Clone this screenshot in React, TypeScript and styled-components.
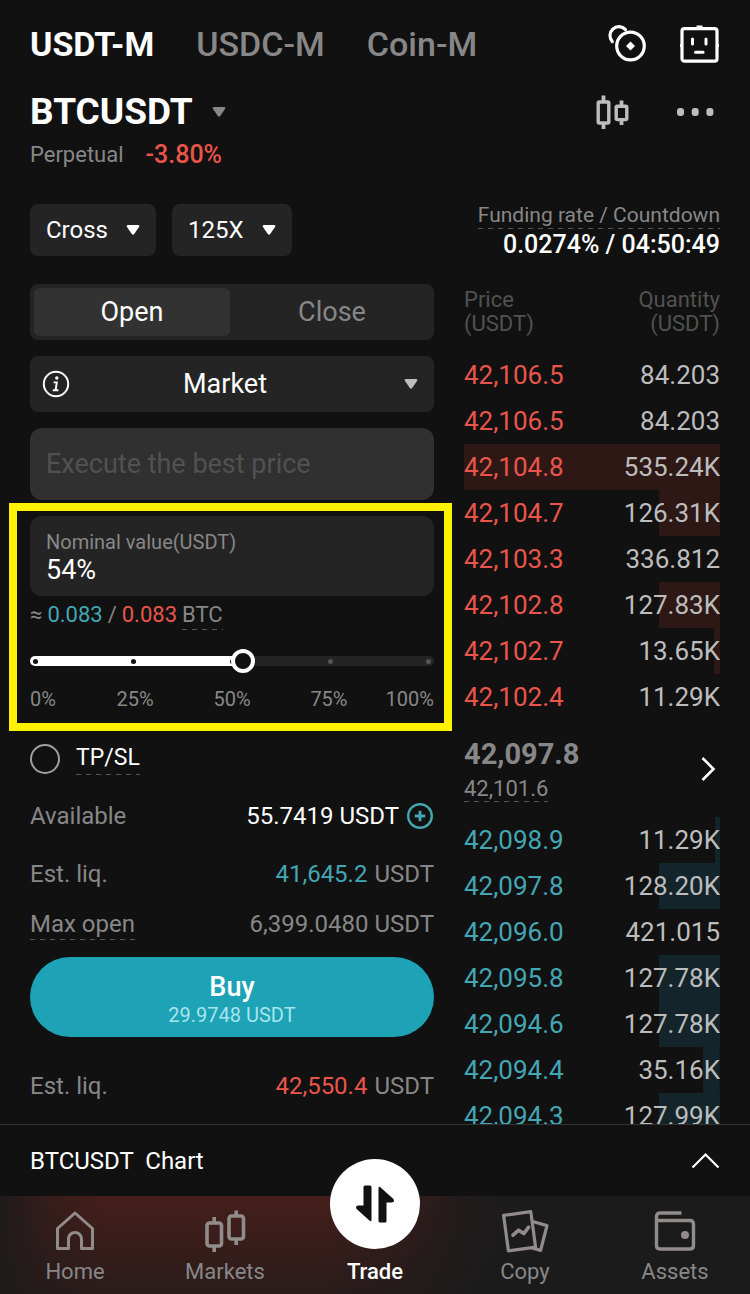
import React, { useState } from 'react';
import styled, { createGlobalStyle } from 'styled-components';

const color = {
  page: '#111111',
  panel: '#242424',
  raised: '#323232',
  muted: '#878787',
  faint: '#515151',
  soft: '#bdbdbd',
  up: '#43a6b5',
  down: '#ea554b',
  brand: '#1da2b6',
};

const GlobalStyle = createGlobalStyle`
  *, *::before, *::after { box-sizing: border-box; }
  body {
    margin: 0;
    background: ${color.page};
    color: #fff;
    font-family: Roboto, 'Liberation Sans', sans-serif;
    font-size: 24px;
    line-height: 30px;
  }
  button, input, select { font: inherit; color: inherit; margin: 0; padding: 0; border: 0; background: none; }
  button { cursor: pointer; }
  a { color: inherit; text-decoration: none; }
  svg { display: block; flex: none; }
`;

const Screen = styled.div`
  display: flex;
  flex-direction: column;
  height: 100vh;
`;

const Main = styled.main`
  flex: 1;
  min-height: 0;
  overflow: hidden;
  padding: 24px 30px 0;
`;

const Bar = styled.div`
  display: flex;
  align-items: center;
  justify-content: space-between;
`;

const TopBar = styled(Bar)`
  height: 40px;
  margin-bottom: 28px;
`;

const PairBar = styled(Bar)`
  padding-right: 6px;
`;

const Tabs = styled.nav`
  display: flex;
  gap: 42px;
`;

const Tab = styled.a<{ $active?: boolean }>`
  font-size: 34px;
  line-height: 40px;
  font-weight: ${(p) => (p.$active ? 700 : 500)};
  color: ${(p) => (p.$active ? '#fff' : color.muted)};
`;

const Tools = styled.div<{ $gap: number }>`
  display: flex;
  align-items: center;
  gap: ${(p) => p.$gap}px;
`;

const IconButton = styled.button<{ $tone?: string }>`
  display: flex;
  color: ${(p) => p.$tone ?? '#fff'};
`;

const PairButton = styled.button`
  display: flex;
  align-items: center;
  gap: 19px;
  font-size: 37px;
  line-height: 40px;
  font-weight: 700;
`;

const PairName = styled.h1`
  margin: 0;
  font: inherit;
`;

const PairMeta = styled.div`
  display: flex;
  gap: 22px;
  margin: 8px 0 34px;
  font-size: 22px;
  color: ${color.muted};
`;

const Change = styled.span`
  font-size: 25px;
  font-weight: 500;
  color: ${color.down};
`;

const Columns = styled.div`
  display: grid;
  grid-template-columns: minmax(0, 101fr) minmax(0, 64fr);
  gap: 30px;
`;

const Column = styled.section`
  display: flex;
  flex-direction: column;
`;

const Dashed = styled.span`
  padding-bottom: 2px;
  background: repeating-linear-gradient(90deg, #555 0 5px, transparent 5px 10px) left bottom / 100% 1px no-repeat;
`;

const ChipRow = styled.div`
  display: flex;
  gap: 16px;
  margin-bottom: 28px;
`;

const SelectBox = styled.label<{ $tall?: boolean }>`
  display: grid;
  align-items: center;
  height: ${(p) => (p.$tall ? 56 : 52)}px;
  border-radius: 8px;
  background: ${color.panel};
  & > * { grid-area: 1 / 1; }
  & > svg { justify-self: end; margin-right: 16px; pointer-events: none; }
`;

const ChipSelect = styled.select`
  appearance: none;
  height: 100%;
  padding: 0 48px 0 16px;
  outline: none;
`;

const TypeSelect = styled.select`
  appearance: none;
  width: 100%;
  height: 100%;
  padding: 0 30px 0 16px;
  font-size: 27px;
  text-align: center;
  text-align-last: center;
  outline: none;
`;

const InfoSlot = styled.span`
  justify-self: start;
  margin-left: 12px;
`;

const Segment = styled.div`
  display: flex;
  gap: 4px;
  padding: 4px;
  height: 56px;
  margin-bottom: 16px;
  border-radius: 8px;
  background: ${color.panel};
`;

const SegmentButton = styled.button<{ $active?: boolean }>`
  flex: 1;
  border-radius: 6px;
  font-size: 27px;
  color: ${(p) => (p.$active ? '#fff' : color.muted)};
  background: ${(p) => (p.$active ? color.raised : 'transparent')};
`;

const PriceInput = styled.input`
  width: 100%;
  height: 72px;
  margin: 16px 0;
  padding: 0 16px;
  border-radius: 12px;
  font-size: 27px;
  background: #303030;
  &::placeholder { color: ${color.faint}; opacity: 1; }
`;

const Sizing = styled.div`
  position: relative;
  display: flex;
  flex-direction: column;
  &::after {
    content: '';
    position: absolute;
    inset: -13px -18px -20px -21px;
    border: 8px solid #fff200;
    pointer-events: none;
  }
`;

const AmountField = styled.label`
  display: flex;
  flex-direction: column;
  height: 80px;
  padding: 12px 16px;
  border-radius: 12px;
  background: ${color.panel};
`;

const AmountLabel = styled.span`
  font-size: 20px;
  line-height: 28px;
  color: ${color.muted};
`;

const AmountInput = styled.input`
  width: 100%;
  font-size: 27px;
  line-height: 28px;
  outline: none;
`;

const Estimate = styled.p`
  display: flex;
  gap: 5px;
  margin: 6px 0 19px;
  font-size: 22px;
  line-height: 26px;
  color: ${color.muted};
`;

const Tone = styled.span<{ $tone: string }>`
  color: ${(p) => p.$tone};
`;

const SliderBox = styled.div`
  display: grid;
  align-items: center;
  height: 24px;
  & > * { grid-area: 1 / 1; }
`;

const Track = styled.div`
  display: flex;
  align-items: center;
  justify-content: space-between;
  height: 10px;
  padding: 0 3px;
  border-radius: 5px;
`;

const Dot = styled.i<{ $passed: boolean }>`
  width: 5px;
  height: 5px;
  border-radius: 50%;
  background: ${(p) => (p.$passed ? color.page : '#555')};
`;

const Range = styled.input`
  appearance: none;
  width: 100%;
  height: 24px;
  outline: none;
  &::-webkit-slider-thumb {
    appearance: none;
    width: 24px;
    height: 24px;
    border: 4px solid #fff;
    border-radius: 50%;
    background: ${color.page};
  }
`;

const Marks = styled.div`
  display: grid;
  grid-template-columns: 14fr 24fr 24fr 24fr 14fr;
  margin-top: 14px;
  font-size: 20px;
  line-height: 24px;
  color: ${color.muted};
  text-align: center;
  span:first-child { text-align: left; }
  span:last-child { text-align: right; }
`;

const StopLabel = styled.label`
  display: flex;
  align-items: center;
  gap: 16px;
  height: 34px;
  margin: 31px 0 25px;
  font-size: 23px;
`;

const RoundCheck = styled.input`
  appearance: none;
  width: 30px;
  height: 30px;
  border: 2px solid #a0a0a0;
  border-radius: 50%;
  &:checked { background: ${color.brand}; }
`;

const Facts = styled.dl`
  display: flex;
  flex-direction: column;
  gap: 20px;
  margin: 0;
`;

const Fact = styled.div<{ $gap?: number }>`
  display: flex;
  justify-content: space-between;
  align-items: center;
  height: 30px;
  margin-top: ${(p) => p.$gap ?? 0}px;
  dt, dd { margin: 0; }
  dt { color: ${color.muted}; }
  dd { display: flex; align-items: center; gap: 7px; color: ${color.muted}; }
`;

const BuyButton = styled.button`
  display: flex;
  flex-direction: column;
  align-items: center;
  justify-content: center;
  height: 80px;
  padding-top: 6px;
  margin: 18px 0 34px;
  border-radius: 40px;
  background: ${color.brand};
`;

const BuyTitle = styled.span`
  font-size: 27px;
  font-weight: 500;
`;

const BuyAmount = styled.span`
  font-size: 20px;
  line-height: 26px;
  color: #a9e4ed;
`;

const Funding = styled.div`
  display: flex;
  flex-direction: column;
  align-items: flex-end;
  height: 52px;
  margin-bottom: 32px;
  white-space: nowrap;
`;

const FundingLabel = styled(Dashed)`
  padding-bottom: 3px;
  font-size: 21px;
  line-height: 22px;
  color: ${color.muted};
`;

const FundingValue = styled.span`
  margin-top: 1px;
  font-size: 25px;
  font-weight: 500;
`;

const Book = styled.table`
  width: 100%;
  border-collapse: collapse;
  line-height: 24px;
  th, td { padding: 0; text-align: left; }
  th:last-child, td:last-child { text-align: right; }
  th { height: 64px; vertical-align: top; font-size: 22px; font-weight: 400; color: ${color.faint}; }
  td { height: 46px; font-size: 26px; color: ${color.soft}; }
`;

const BookRow = styled.tr<{ $side: 'ask' | 'bid' }>`
  background: ${(p) => {
    const fill = p.$side === 'ask' ? '#2e1816' : '#13252a';
    return `linear-gradient(${fill}, ${fill}) right / 0 100% no-repeat`;
  }};
  td:first-child { color: ${(p) => (p.$side === 'ask' ? color.down : color.up)}; }
`;

const LastPrice = styled.div`
  display: flex;
  justify-content: space-between;
  align-items: center;
  height: 97px;
  padding-right: 4px;
`;

const LastValues = styled.div`
  display: flex;
  flex-direction: column;
  align-items: flex-start;
  gap: 4px;
`;

const LastTrade = styled.strong`
  font-size: 29px;
  line-height: 36px;
  color: ${color.muted};
`;

const MarkPrice = styled(Dashed)`
  padding: 0;
  font-size: 22px;
  line-height: 26px;
  color: ${color.muted};
`;

const ChartBar = styled.button`
  display: flex;
  flex: none;
  align-items: center;
  justify-content: space-between;
  height: 72px;
  padding: 0 30px;
  border-top: 1px solid #333;
  white-space: pre;
`;

const BottomNav = styled.nav`
  display: grid;
  flex: none;
  grid-template: 100% / repeat(5, 1fr);
  height: 98px;
  background:
    linear-gradient(#1b1b1b00, #1b1b1ba8),
    linear-gradient(95deg, #1f1b1b 0%, #381d1b 7%, #451e1b 14%, #451e1b 44%, #341d1b 54%, #1f1b1b 62%, #1b1b1b 68%);
`;

const NavItem = styled.a<{ $active?: boolean }>`
  display: flex;
  flex-direction: column;
  align-items: center;
  justify-content: flex-end;
  padding-bottom: 7px;
  font-size: 22px;
  color: ${(p) => (p.$active ? '#fff' : color.muted)};
  font-weight: ${(p) => (p.$active ? 500 : 400)};
`;

const NavIcon = styled.span`
  display: flex;
  align-items: center;
  height: 44px;
  margin-bottom: 4px;
  color: #918c8b;
`;

const TradeBadge = styled.span`
  display: grid;
  place-items: center;
  flex: none;
  width: 90px;
  height: 90px;
  margin-bottom: 8px;
  border-radius: 50%;
  background: #fff;
  color: #111;
`;

const Caret = ({ tone = '#fff' }: { tone?: string }) => (
  <svg width="14" height="12" viewBox="0 0 14 12" fill={tone}>
    <path d="M2 1h10q2 0 1 2L8.2 10q-1.2 1.6-2.4 0L1 3Q0 1 2 1Z" />
  </svg>
);

const CoinsIcon = () => (
  <svg width="40" height="40" viewBox="0 0 40 40" fill="none" stroke="currentColor" strokeWidth="3.2" strokeLinecap="round">
    <circle cx="22.5" cy="22" r="13.8" />
    <path d="M4.3 17.6A8.8 8.8 0 1 1 17.5 5.6" />
    <path d="M22.5 17.5l4.500 4.500-4.500 4.500-4.500-4.500z" fill="currentColor" stroke="none" />
  </svg>
);

const BotIcon = () => (
  <svg width="40" height="40" viewBox="0 0 40 40" fill="none" stroke="currentColor">
    <rect x="2" y="4.6" width="35" height="32.6" rx="2.5" strokeWidth="3.2" />
    <path d="M16.5 3h6M0 21.5h2M37 21.5h2" strokeWidth="3" />
    <path d="M12.5 15v5M26 15v5M15.5 28.200h7.600" strokeWidth="3" strokeLinecap="round" />
  </svg>
);

const CandlesIcon = () => (
  <svg width="34" height="36" viewBox="0 0 34 36" fill="none" stroke="currentColor" strokeWidth="3.4">
    <rect x="2.2" y="8" width="10.6" height="21" rx="1" />
    <rect x="20.2" y="12.2" width="10.6" height="13.4" rx="1" />
    <path d="M7.5 1.500v6M7.500 29v6M25.500 6.500v5M25.500 26v5" strokeWidth="3.8" />
  </svg>
);

const MoreIcon = () => (
  <svg width="38" height="10" viewBox="0 0 38 10" fill="currentColor">
    <rect x="1" y="1" width="7" height="8" rx="3" />
    <rect x="15.7" y="1" width="7" height="8" rx="3" />
    <rect x="30.4" y="1" width="7" height="8" rx="3" />
  </svg>
);

const InfoIcon = () => (
  <svg width="28" height="28" viewBox="0 0 28 28" fill="none" stroke="currentColor">
    <circle cx="14" cy="14" r="12.2" strokeWidth="2" />
    <circle cx="14.8" cy="8" r="1.7" fill="currentColor" stroke="none" />
    <path d="M11.6 12.4h3.2L13.6 20M10.8 20.200h5.600" strokeWidth="1.9" />
  </svg>
);

const PlusIcon = () => (
  <svg width="28" height="28" viewBox="0 0 28 28" fill="none" stroke="currentColor">
    <circle cx="14" cy="14" r="11.8" strokeWidth="2.4" />
    <path d="M14 8.800v10.400M8.800 14h10.400" strokeWidth="2.8" />
  </svg>
);

const ChevronRight = () => (
  <svg width="16" height="26" viewBox="0 0 16 26" fill="none" stroke="currentColor" strokeWidth="2.6">
    <path d="M2.5 2l11 11-11 11" />
  </svg>
);

const ChevronUp = () => (
  <svg width="29" height="17" viewBox="0 0 29 17" fill="none" stroke="currentColor" strokeWidth="2.2">
    <path d="M1.5 15.500l13-13 13 13" />
  </svg>
);

const HomeIcon = () => (
  <svg width="40" height="42" viewBox="0 0 40 42" fill="none" stroke="currentColor" strokeWidth="3">
    <path d="M2.5 18.500 20 3l17.500 15.500V38.500H26.500V29a6.500 6.500 0 0 0-13 0v9.500h-11Z" strokeLinejoin="round" />
  </svg>
);

const MarketsIcon = () => (
  <svg width="42" height="44" viewBox="0 0 42 44" fill="none" stroke="currentColor" strokeWidth="3.6">
    <rect x="3" y="14" width="14.5" height="23" rx="2.5" />
    <rect x="25" y="7" width="14.5" height="23" rx="2.5" />
    <path d="M10.2 8v6M10.200 37v6M32.200 1.500v5.500M32.200 30v6" />
  </svg>
);

const TradeIcon = () => (
  <svg width="40" height="40" viewBox="0 0 40 40" fill="currentColor">
    <path d="M8.5 3q0-1.500 1.500-1.500h5q1.500 0 1.500 1.500v32.500q0 3-2.400.8L1.600 25q-1.600-3 1.400-3.500h5.500Z" />
    <path d="M31.5 37q0 1.500-1.500 1.500h-5q-1.500 0-1.500-1.500V4.500q0-3 2.400-.8L38.400 15q1.600 3-1.400 3.500h-5.500Z" />
  </svg>
);

const CopyIcon = () => (
  <svg width="48" height="44" viewBox="0 0 48 44" fill="none" stroke="currentColor" strokeWidth="3.2" strokeLinejoin="round" strokeLinecap="round">
    <path d="M2.6 6.400 29.800 2.600 34.600 38.200 7.400 41.800Z" />
    <path d="M32.6 12.800l13.400 3.800-6.400 24.800-8.600-2.400" />
    <path d="M12 26.200l5.600-5 5.200 3.400 4.800-6.400" strokeWidth="3.6" />
  </svg>
);

const WalletIcon = () => (
  <svg width="42" height="42" viewBox="0 0 42 42" fill="none" stroke="currentColor" strokeWidth="3.4">
    <path d="M27.5 3H6Q2.500 3 2.500 6.500v29Q2.500 39 6 39h30q3.500 0 3.500-3.500V14q0-3.500-3.500-3.500H3" />
    <circle cx="31" cy="25" r="4" fill="currentColor" stroke="none" />
  </svg>
);

type Level = [price: string, quantity: string, depth: number];

const asks: Level[] = [
  ['42,106.5', '84.203', 0],
  ['42,106.5', '84.203', 0],
  ['42,104.8', '535.24K', 100],
  ['42,104.7', '126.31K', 24],
  ['42,103.3', '336.812', 0],
  ['42,102.8', '127.83K', 24],
  ['42,102.7', '13.65K', 2.5],
  ['42,102.4', '11.29K', 0],
];

const bids: Level[] = [
  ['42,098.9', '11.29K', 2],
  ['42,097.8', '128.20K', 24],
  ['42,096.0', '421.015', 0],
  ['42,095.8', '127.78K', 24],
  ['42,094.6', '127.78K', 24],
  ['42,094.4', '35.16K', 6.5],
  ['42,094.3', '127.99K', 24],
];

const Levels = ({ side, rows }: { side: 'ask' | 'bid'; rows: Level[] }) => (
  <tbody>
    {rows.map(([price, quantity, depth], i) => (
      <BookRow key={i} $side={side} style={{ backgroundSize: `${depth}% 100%` }}>
        <td>{price}</td>
        <td>{quantity}</td>
      </BookRow>
    ))}
  </tbody>
);

const SizeSlider = () => {
  const [value, setValue] = useState(53);
  return (
    <>
      <SliderBox>
        <Track style={{ background: `linear-gradient(90deg, #fff ${value}%, ${color.panel} ${value}%)` }}>
          {[0, 25, 50, 75, 100].map((stop) => (
            <Dot key={stop} $passed={stop < value} />
          ))}
        </Track>
        <Range
          type="range"
          aria-label="Order size"
          min={0}
          max={100}
          value={value}
          onChange={(e) => setValue(Number(e.target.value))}
        />
      </SliderBox>
      <Marks>
        <span>0%</span>
        <span>25%</span>
        <span>50%</span>
        <span>75%</span>
        <span>100%</span>
      </Marks>
    </>
  );
};

export default function App() {
  const [side, setSide] = useState<'Open' | 'Close'>('Open');
  return (
    <Screen>
      <GlobalStyle />
      <Main>
        <TopBar>
          <Tabs>
            <Tab href="#usdt-m" $active>USDT-M</Tab>
            <Tab href="#usdc-m">USDC-M</Tab>
            <Tab href="#coin-m">Coin-M</Tab>
          </Tabs>
          <Tools $gap={32}>
            <IconButton aria-label="Bonus"><CoinsIcon /></IconButton>
            <IconButton aria-label="Trading bots"><BotIcon /></IconButton>
          </Tools>
        </TopBar>
        <PairBar>
          <PairButton>
            <PairName>BTCUSDT</PairName>
            <Caret tone={color.muted} />
          </PairButton>
          <Tools $gap={46}>
            <IconButton aria-label="Chart" $tone={color.soft}><CandlesIcon /></IconButton>
            <IconButton aria-label="More" $tone={color.soft}><MoreIcon /></IconButton>
          </Tools>
        </PairBar>
        <PairMeta>
          Perpetual <Change>-3.80%</Change>
        </PairMeta>

        <Columns>
          <Column>
            <ChipRow>
              <SelectBox>
                <ChipSelect aria-label="Margin mode"><option>Cross</option></ChipSelect>
                <Caret />
              </SelectBox>
              <SelectBox>
                <ChipSelect aria-label="Leverage"><option>125X</option></ChipSelect>
                <Caret />
              </SelectBox>
            </ChipRow>
            <Segment>
              <SegmentButton $active={side === 'Open'} onClick={() => setSide('Open')}>Open</SegmentButton>
              <SegmentButton $active={side === 'Close'} onClick={() => setSide('Close')}>Close</SegmentButton>
            </Segment>
            <SelectBox $tall>
              <TypeSelect aria-label="Order type"><option>Market</option></TypeSelect>
              <InfoSlot><InfoIcon /></InfoSlot>
              <Caret tone={color.soft} />
            </SelectBox>
            <PriceInput aria-label="Price" placeholder="Execute the best price" disabled />

            <Sizing>
              <AmountField>
                <AmountLabel>Nominal value(USDT)</AmountLabel>
                <AmountInput defaultValue="54%" />
              </AmountField>
              <Estimate>
                <span>≈</span>
                <Tone $tone={color.up}>0.083</Tone>
                <span>/</span>
                <Tone $tone={color.down}>0.083</Tone>
                <Dashed>BTC</Dashed>
              </Estimate>
              <SizeSlider />
            </Sizing>

            <StopLabel>
              <RoundCheck type="checkbox" />
              <Dashed>TP/SL</Dashed>
            </StopLabel>

            <Facts>
              <Fact>
                <dt>Available</dt>
                <dd>
                  <Tone $tone="#fff">55.7419 USDT</Tone>
                  <IconButton aria-label="Add funds" $tone={color.up}><PlusIcon /></IconButton>
                </dd>
              </Fact>
              <Fact $gap={8}>
                <dt>Est. liq.</dt>
                <dd><Tone $tone={color.up}>41,645.2</Tone> USDT</dd>
              </Fact>
              <Fact>
                <dt><Dashed>Max open</Dashed></dt>
                <dd>6,399.0480 USDT</dd>
              </Fact>
            </Facts>
            <BuyButton>
              <BuyTitle>Buy</BuyTitle>
              <BuyAmount>29.9748 USDT</BuyAmount>
            </BuyButton>
            <Facts>
              <Fact>
                <dt>Est. liq.</dt>
                <dd><Tone $tone={color.down}>42,550.4</Tone> USDT</dd>
              </Fact>
            </Facts>
          </Column>

          <Column>
            <Funding>
              <FundingLabel>Funding rate / Countdown</FundingLabel>
              <FundingValue>0.0274% / 04:50:49</FundingValue>
            </Funding>
            <Book>
              <thead>
                <tr>
                  <th>Price<br />(USDT)</th>
                  <th>Quantity<br />(USDT)</th>
                </tr>
              </thead>
              <Levels side="ask" rows={asks} />
            </Book>
            <LastPrice>
              <LastValues>
                <LastTrade>42,097.8</LastTrade>
                <MarkPrice>42,101.6</MarkPrice>
              </LastValues>
              <IconButton aria-label="Order book details"><ChevronRight /></IconButton>
            </LastPrice>
            <Book>
              <Levels side="bid" rows={bids} />
            </Book>
          </Column>
        </Columns>
      </Main>

      <ChartBar>
        <span>BTCUSDT  Chart</span>
        <ChevronUp />
      </ChartBar>
      <BottomNav>
        <NavItem href="#home"><NavIcon><HomeIcon /></NavIcon>Home</NavItem>
        <NavItem href="#markets"><NavIcon><MarketsIcon /></NavIcon>Markets</NavItem>
        <NavItem href="#trade" $active><TradeBadge><TradeIcon /></TradeBadge>Trade</NavItem>
        <NavItem href="#copy"><NavIcon><CopyIcon /></NavIcon>Copy</NavItem>
        <NavItem href="#assets"><NavIcon><WalletIcon /></NavIcon>Assets</NavItem>
      </BottomNav>
    </Screen>
  );
}
